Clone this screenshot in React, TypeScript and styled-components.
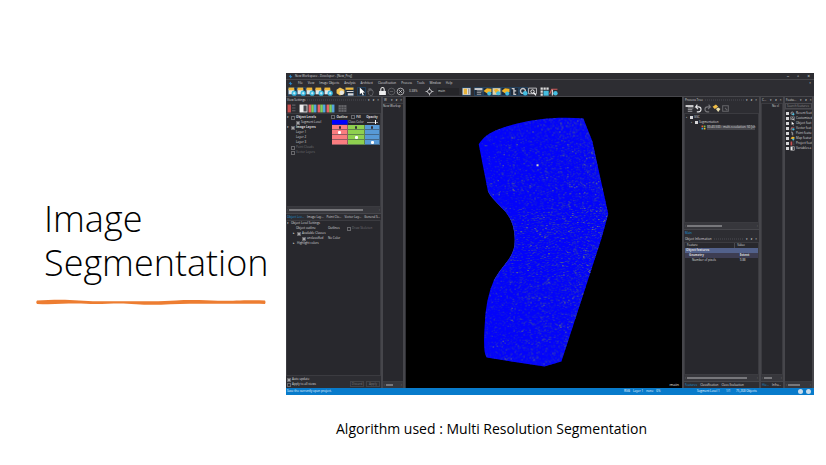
import React from "react";
import styled, { createGlobalStyle, css } from "styled-components";

const GlobalStyle = createGlobalStyle`
  * { box-sizing: border-box; }
  body { margin: 0; background: #ffffff; color: #000000; font-family: "Open Sans", "Noto Sans", sans-serif; }
  button, input, select { font: inherit; color: inherit; margin: 0; padding: 0; border: 0; background: none; }
  ul { list-style: none; margin: 0; padding: 0; }
`;

/* ---------- slide ---------- */

const Slide = styled.main`
  display: grid;
  grid-template-columns: 286px minmax(0, 1fr);
  padding-right: 12px;
`;

const TitleColumn = styled.header`
  padding: 197px 0 0 36px;
`;

const Title = styled.h1`
  margin: 0 0 14px;
  padding-left: 8px;
  font-family: "Open Sans", sans-serif;
  font-size: 36px;
  font-weight: 300;
  line-height: 44px;
`;

const Stroke = styled.svg`
  display: block;
  width: 230px;
  height: 7px;
`;

const Figure = styled.figure`
  margin: 0;
  padding-top: 73px;
  min-width: 0;
`;

const Caption = styled.figcaption`
  padding: 24px 0 0 50px;
  font-family: "Open Sans", sans-serif;
  font-size: 14px;
  line-height: 20px;
`;

/* ---------- application window ---------- */

const Window = styled.section`
  display: flex;
  flex-direction: column;
  background: #2d2d32;
  color: #dcdcde;
  font-family: "Open Sans", "Noto Sans", sans-serif;
  font-size: 3px;
  font-weight: 500;
  line-height: 5px;
  white-space: nowrap;
  overflow: hidden;
`;

const TitleBar = styled.div`
  display: flex;
  align-items: center;
  height: 7px;
  padding: 0 4px 0 2px;
  gap: 2px;
  border-bottom: 1px solid #47474c;
`;

const Spacer = styled.span`
  flex: 1;
`;

const WindowButtons = styled.div`
  display: flex;
  gap: 8px;
  font-size: 5px;
`;

const MenuBar = styled.nav`
  display: flex;
  align-items: center;
  height: 7px;
  padding: 0 3px 0 2px;
  gap: 5px;
`;

const PlainButton = styled.button`
  display: block;
  line-height: 5px;
`;

const Toolbar = styled.div<{ $small?: boolean }>`
  display: flex;
  align-items: center;
  height: ${(p) => (p.$small ? 10 : 9)}px;
  padding-left: ${(p) => (p.$small ? 1 : 2)}px;
  gap: 3px;
`;

const ToolGroup = styled.div`
  display: flex;
`;

const ToolButton = styled.button<{ $on?: boolean }>`
  width: 9px;
  height: 9px;
  ${(p) => p.$on && css`background: #1f2a38; box-shadow: inset 0 0 0 1px #23405c;`}
  svg { display: block; width: 9px; height: 9px; }
`;

const MiniSelect = styled.select<{ $wide?: boolean }>`
  appearance: none;
  width: ${(p) => (p.$wide ? 22 : 14)}px;
  height: 7px;
  padding-left: 1px;
  line-height: 5px;
  background: ${(p) => (p.$wide ? "#252529" : "transparent")};
`;

const Body = styled.div`
  display: grid;
  grid-template-columns: 97px 22px minmax(0, 1fr) 77px 24px 29px;
  height: 292px;
  border-top: 1px solid #47474c;
  background: #46464b;
`;

const Dock = styled.div`
  display: flex;
  flex-direction: column;
  min-width: 0;
  overflow: hidden;
  background: #2d2d32;
  border-right: 2px solid #46464b;
`;

const DockHeader = styled.div`
  display: flex;
  align-items: center;
  height: 6px;
  padding: 0 2px 0 1px;
  gap: 2px;
`;

const Grip = styled.span`
  flex: 1;
  height: 2px;
  background: repeating-linear-gradient(90deg, #3c3c42 0 1px, #2d2d32 1px 2px);
`;

const DockTools = styled.div`
  display: flex;
  gap: 3px;
`;

const Panel = styled.div<{ $grow?: boolean; $height?: number }>`
  ${(p) => (p.$grow ? "flex: 1;" : "")}
  ${(p) => (p.$height ? `height: ${p.$height}px;` : "")}
  min-height: 0;
  overflow: hidden;
  background: #28282d;
  border: 1px solid #3b3b40;
`;

const PlainPanel = styled(Panel)`
  border-width: 1px 0;
`;

const ScrollTrack = styled.div`
  display: flex;
  align-items: center;
  height: 6px;
  padding: 0 1px;
  gap: 1px;
  background: #37373c;
  color: #8b8b8f;
`;

const Thumb = styled.span<{ $size: number }>`
  width: ${(p) => p.$size}%;
  height: 2px;
  margin-right: auto;
  background: #77777b;
`;

const Tabs = styled.div`
  display: flex;
  height: 7px;
  align-items: center;
  gap: 3px;
  padding-left: 1px;
  border-top: 1px solid #46464b;
`;

const Tab = styled.button<{ $on?: boolean }>`
  line-height: 5px;
  color: ${(p) => (p.$on ? "#1b93d8" : "#dcdcde")};
`;

const Tree = styled.ul`
  padding: 1px 0 0 1px;
`;

const TreeRow = styled.li<{ $depth?: number; $bold?: boolean; $dim?: boolean }>`
  display: flex;
  align-items: center;
  gap: 1px;
  height: 5px;
  padding-left: ${(p) => (p.$depth || 0) * 5}px;
  font-weight: ${(p) => (p.$bold ? 700 : 500)};
  color: ${(p) => (p.$dim ? "#727276" : "inherit")};
`;

const Arrow = styled.span`
  width: 3px;
`;

const CheckLabel = styled.label`
  display: flex;
  align-items: center;
  gap: 1px;
  line-height: 5px;
`;

const CheckBox = styled.input.attrs({ type: "checkbox" })`
  appearance: none;
  width: 4px;
  height: 4px;
  border: 1px solid #67676b;
  &:checked { background: #a5a5a8; }
`;

const LayerGrid = styled.div`
  display: grid;
  grid-template-columns: 45px 16px 17px 1fr;
  padding-top: 1px;
`;

const LayerColumn = styled.div`
  display: flex;
  flex-direction: column;
  min-width: 0;
`;

const Cell = styled.div<{ $bg?: string; $bold?: boolean }>`
  display: flex;
  align-items: center;
  justify-content: center;
  height: 5px;
  background: ${(p) => p.$bg || "transparent"};
  border-style: solid;
  border-color: ${(p) => (p.$bg ? "rgba(50, 60, 70, 0.5)" : "transparent")};
  border-width: 0 1px 1px 0;
  font-weight: ${(p) => (p.$bold ? 700 : 500)};
`;

const Dot = styled.span<{ $dark?: boolean }>`
  width: ${(p) => (p.$dark ? 2 : 3)}px;
  height: 3px;
  border-radius: 1px;
  background: ${(p) => (p.$dark ? "#32323a" : "#ffffff")};
`;

const Range = styled.input.attrs({ type: "range" })`
  appearance: none;
  width: 11px;
  height: 1px;
  background: #99999d;
  &::-webkit-slider-thumb { appearance: none; width: 1px; height: 4px; background: #ffffff; }
`;

const SettingRow = styled.div`
  display: grid;
  grid-template-columns: 41px 19px 1fr;
  height: 5px;
`;

const Indent = styled.div<{ $depth: number }>`
  display: flex;
  align-items: center;
  gap: 1px;
  padding-left: ${(p) => p.$depth * 3}px;
`;

const UpdateBar = styled.div`
  display: flex;
  justify-content: space-between;
  align-items: flex-end;
  height: 12px;
  padding: 0 1px 1px;
`;

const ButtonPair = styled.div`
  display: flex;
  gap: 2px;
`;

const DimButton = styled.button`
  width: 14px;
  height: 6px;
  line-height: 4px;
  color: #7a7a7e;
  border: 1px solid #414146;
`;

const Viewport = styled.div`
  display: flex;
  position: relative;
  min-width: 0;
  background: #000000;
  border-left: 1px solid #303035;
  border-right: 2px solid #46464b;
`;

const Scene = styled.svg`
  width: 100%;
  height: 100%;
`;

const SceneLabel = styled.span`
  position: absolute;
  right: 3px;
  bottom: 1px;
  font-size: 4px;
  color: #e8e8e8;
`;

const Highlight = styled.span`
  background: #46464b;
`;

const Bullet = styled.span`
  flex: none;
  width: 3px;
  height: 3px;
  background: #d6d6d8;
`;

const SearchInput = styled.input`
  display: block;
  width: 100%;
  height: 6px;
  padding-left: 1px;
  border: 1px solid #4a4a4f;
  &::placeholder { color: #8d8d91; opacity: 1; }
`;

const InfoTable = styled.table`
  width: 100%;
  border-collapse: collapse;
  table-layout: fixed;
  th, td { height: 5px; padding: 0 0 0 2px; line-height: 5px; text-align: left; font-weight: 500; }
  th:first-child { width: 68%; border-right: 1px solid #4a4a4f; }
`;

const InfoRow = styled.tr<{ $bg?: string; $depth?: number; $bold?: boolean }>`
  background: ${(p) => p.$bg || "transparent"};
  && td { font-weight: ${(p) => (p.$bold ? 700 : 500)}; }
  && td:first-child { padding-left: ${(p) => 1 + (p.$depth || 0) * 3}px; }
  && td:last-child { padding-left: 5px; }
`;

const StatusBar = styled.footer`
  display: grid;
  grid-template-columns: 337px 73px 29px 10px 1fr auto;
  align-items: center;
  height: 7px;
  padding: 0 3px 0 1px;
  background: #087bcb;
  color: #f2f9ff;
`;

const StatusGroup = styled.span`
  display: flex;
  gap: 3px;
`;

const StatusDot = styled.i`
  width: 5px;
  height: 5px;
  border-radius: 50%;
  background: #c9dcea;
`;

/* ---------- icons ---------- */

type IconKind =
  | "layers" | "folder" | "window" | "cursor" | "hand" | "lock" | "minus" | "plus" | "move"
  | "columns" | "form" | "cube" | "picture" | "tree" | "gear" | "find" | "grid" | "chart"
  | "mono" | "rgb" | "undo" | "redo" | "chain" | "box" | "tiles" | "bars" | "table";

const glyphs: Record<IconKind, React.ReactNode> = {
  layers: (<><path d="M1 2h5v5H1z" fill="#dfe6ea" /><path d="M1 1h5v2.4H1z" fill="#f0b83a" /><circle cx="6" cy="6" r="2.3" fill="#35b6de" /><path d="M6 4.8v2.4M4.8 6h2.4" stroke="#e9faff" strokeWidth=".7" /></>),
  folder: (<><path d="M1 3l3-2 4 2v3L4 8 1 6z" fill="#f2c455" /><circle cx="5.6" cy="5.6" r="2" fill="#e6e6e2" /></>),
  window: (<><path d="M1 1h7v2H1z" fill="#f0b83a" /><path d="M2 4h6v1H2zM3 6h5v2H3z" fill="#d5d5d8" /></>),
  cursor: <path d="M3 1v6l1.5-1.4L5.6 8l1-.4-1-2.2h2z" fill="#fff" />,
  hand: <path d="M3 7L2 4l1 .6V2l1 2V1.5l1 2V2l1 2V3l1 2-1 3H4z" fill="none" stroke="#66666b" strokeWidth=".7" />,
  lock: (<><path d="M3 4V2.5a1.5 1.5 0 013 0V4" fill="none" stroke="#eee" strokeWidth=".9" /><path d="M1.5 4h6v3.6h-6z" fill="#eee" /></>),
  minus: (<><circle cx="4.5" cy="4.5" r="3" fill="none" stroke="#66666a" strokeWidth=".7" /><path d="M3 4.5h3" stroke="#66666a" strokeWidth=".7" /></>),
  plus: (<><circle cx="4.5" cy="4.5" r="3" fill="none" stroke="#c5c5c8" strokeWidth=".7" /><path d="M3.3 3.3l2.4 2.4M5.7 3.3L3.3 5.7" stroke="#c5c5c8" strokeWidth=".8" /></>),
  move: (<><path d="M4.5 1v7M1 4.5h7" stroke="#c5c5c8" strokeWidth=".8" /><circle cx="4.5" cy="4.5" r="1.8" fill="#2d2d32" stroke="#c5c5c8" strokeWidth=".8" /></>),
  columns: (<><path d="M1 1.5h7v6H1z" fill="#e2e2e2" /><path d="M2 2h3v5H2z" fill="#e6b33b" /><path d="M6 2h1v5H6z" fill="#8b8b8b" /></>),
  form: (<><path d="M1 1.5h7v1.6H1z" fill="#d8d8da" /><path d="M3 4h5M3 5.5h4M3 7h4" stroke="#a5a5a8" strokeWidth=".8" /></>),
  cube: (<><path d="M1 4l3-2.5L8 2v3L4 6z" fill="#f0b429" /><circle cx="6" cy="6.2" r="1.8" fill="#45bde0" /></>),
  picture: (<><path d="M1 1.5h7v6H1z" fill="#d9d2b0" /><path d="M2 3l3-1 2 2-3 2z" fill="#f0b429" /><circle cx="6" cy="6" r="1.8" fill="#45bde0" /></>),
  tree: <path d="M2 2h2v2h2M4 4v3h2" fill="none" stroke="#c9c9cc" strokeWidth="1.2" />,
  gear: (<><circle cx="4" cy="4" r="2.2" fill="none" stroke="#c5c5c8" strokeWidth="1.2" /><circle cx="6" cy="6" r="2" fill="#45bde0" /></>),
  find: (<><path d="M1 1.5h7v5H1z" fill="none" stroke="#c5c5c8" strokeWidth=".8" /><circle cx="4.5" cy="4.5" r="1.5" fill="none" stroke="#fff" strokeWidth=".8" /><path d="M5.5 5.5L7.6 8" stroke="#fff" /></>),
  grid: (<><path d="M1 1h2v2H1zM3.6 1h2v2h-2zM6.2 1h2v2h-2zM1 3.6h2v2H1zM1 6.2h2v2H1z" fill="#ddd" /><path d="M3.6 3.8h4.6v4.4H3.6z" fill="#45bde0" /></>),
  chart: (<><path d="M1 7L3 2.5h5" fill="none" stroke="#d35b5b" strokeWidth="1" /><path d="M3.5 3v5" stroke="#ddd" /><circle cx="6.2" cy="6" r="2" fill="#45bde0" /></>),
  mono: (<><path d="M1 1h7v7H1z" fill="#eee" /><path d="M4.5 1.8h2.8v5.4H4.5z" fill="#46464b" /></>),
  rgb: (<><path d="M1 1h2.4v7H1z" fill="#e76565" /><path d="M3.4 1h2.3v7H3.4z" fill="#80cf5c" /><path d="M5.7 1H8v7H5.7z" fill="#55a4dc" /></>),
  undo: <path d="M3.5 1L2 3h2.5a2.2 2.2 0 010 4.5H3M2 3l2 2" fill="none" stroke="#e6e6e8" strokeWidth="1" />,
  redo: <path d="M5.5 1L7 3H4.5a2.2 2.2 0 000 4.5H6M7 3L5 5" fill="none" stroke="#77777b" strokeWidth="1" />,
  chain: (<><path d="M1 3l3-2 2 2-3 2z" fill="#f0bd45" /><path d="M4 5l2-1.5L8 5 6 7.5z" fill="#e9dfae" /></>),
  box: <path d="M2 2h5v5H2zM4 4l2 2" fill="none" stroke="#66666a" strokeWidth=".9" />,
  table: (<><path d="M1 1.5h7v6H1z" fill="#68686c" /><path d="M1 3.5h7M1 5.5h7M3.3 1.5v6M5.7 1.5v6" stroke="#38383d" strokeWidth=".5" /></>),
  tiles: (<><path d="M1 1h3v3H1z" fill="#e85d35" /><path d="M5 1h3v3H5z" fill="#7dc242" /><path d="M1 5h3v3H1z" fill="#35a5e5" /><path d="M5 5h3v3H5z" fill="#f2c12e" /></>),
  bars: (<><path d="M1 1h3v7H1z" fill="#c94f4f" /><path d="M5 1.5h3M5 4h3M5 6.5h3" stroke="#5f5f64" strokeWidth="1" /></>),
};

const SmallIcon = styled.svg`
  flex: none;
  display: block;
  width: 5px;
  height: 5px;
`;

const Glyph = ({ kind }: { kind: IconKind }) => <svg viewBox="0.5 0.5 8 8" aria-hidden="true">{glyphs[kind]}</svg>;

const Tools = ({ kinds, on = [] }: { kinds: IconKind[]; on?: number[] }) => (
  <ToolGroup>
    {kinds.map((kind, i) => (
      <ToolButton key={i} $on={on.includes(i)} aria-label={kind}><Glyph kind={kind} /></ToolButton>
    ))}
  </ToolGroup>
);

const Header = ({ name }: { name: string }) => (
  <DockHeader>
    <span>{name}</span>
    <Grip />
    <DockTools>
      <PlainButton aria-label="Menu">▾</PlainButton>
      <PlainButton aria-label="Pin">ᴘ</PlainButton>
      <PlainButton aria-label="Close">×</PlainButton>
    </DockTools>
  </DockHeader>
);

const Scroll = ({ size }: { size: number }) => (
  <ScrollTrack><span>‹</span><Thumb $size={size} /><span>›</span></ScrollTrack>
);

const Check = ({ label, checked = false }: { label: string; checked?: boolean }) => (
  <CheckLabel><CheckBox defaultChecked={checked} />{label}</CheckLabel>
);

/* ---------- segmented field ---------- */

const FIELD =
  "M73 47C78 38 88 33 101 29C128 21 153 19 178 21L187 44L203 117L196 142L156 265L139 270L81 261Q77 256 79 228Q80 202 88 184C96 168 108 162 109 146C110 128 103 117 96 111C89 103 84 99 82 93Z";

const speckle = (count: number, seed: number, skew: number) => {
  let state = seed;
  const next = () => {
    state = (state + 0x6d2b79f5) | 0;
    let t = Math.imul(state ^ (state >>> 15), 1 | state);
    t = (t + Math.imul(t ^ (t >>> 7), 61 | t)) ^ t;
    return ((t ^ (t >>> 14)) >>> 0) / 4294967296;
  };
  let d = "";
  for (let i = 0; i < count; i++) {
    const x = Math.floor(72 + 132 * Math.pow(next(), skew));
    const y = Math.floor(20 + 251 * next());
    d += `M${x} ${y}h1v1h-1z`;
  }
  return d;
};

const specks = [
  { color: "#1018e0", d: speckle(7000, 11, 0.8) },
  { color: "#2430c0", d: speckle(3000, 71, 0.7) },
  { color: "#44509c", d: speckle(800, 37, 0.6) },
  { color: "#7c886a", d: speckle(140, 93, 0.6) },
];

const FieldScene = () => (
  <Scene viewBox="0 0 277 291" role="img" aria-label="Segmented field">
    <clipPath id="field"><path d={FIELD} /></clipPath>
    <path d={FIELD} fill="#0303fa" />
    <g clipPath="url(#field)">
      {specks.map((s) => <path key={s.color} d={s.d} fill={s.color} />)}
      <path d="M82 93C84 99 89 103 96 111C103 117 110 128 109 146C108 162 96 168 88 184" fill="none" stroke="#3040b8" strokeWidth="1" />
      <path d="M131 67h2v2h-2z" fill="#d8dac4" />
    </g>
  </Scene>
);

/* ---------- docks ---------- */

const menus = ["File", "View", "Image Objects", "Analysis", "Architect", "Classification", "Process", "Tools", "Window", "Help"];

const LayerTable = () => (
  <LayerGrid>
    <LayerColumn>
      <TreeRow $bold><Arrow>▾</Arrow><Check label="Object Levels" /></TreeRow>
      <TreeRow $depth={1}><Arrow /><Check label="Segment Level" checked /></TreeRow>
      <TreeRow $bold><Arrow>▾</Arrow><Check label="Image Layers" checked /></TreeRow>
      <TreeRow $depth={1}><Arrow />Layer 1</TreeRow>
      <TreeRow $depth={1}><Arrow />Layer 2</TreeRow>
      <TreeRow $depth={1}><Arrow />Layer 3</TreeRow>
      <TreeRow $dim><Arrow /><Check label="Point Clouds" /></TreeRow>
      <TreeRow $dim><Arrow /><Check label="Vector Layers" /></TreeRow>
    </LayerColumn>
    <LayerColumn>
      <Cell $bold><Check label="Outline" /></Cell>
      <Cell $bg="#0000ff" />
      <Cell $bg="#fb7d80"><Dot $dark /></Cell>
      <Cell $bg="#fb7d80"><Dot /></Cell>
      <Cell $bg="#fb7d80" />
      <Cell $bg="#fb7d80" />
    </LayerColumn>
    <LayerColumn>
      <Cell $bold><Check label="Fill" /></Cell>
      <Cell>Class Color</Cell>
      <Cell $bg="#8fd04f"><Dot $dark /></Cell>
      <Cell $bg="#8fd04f" />
      <Cell $bg="#8fd04f"><Dot /></Cell>
      <Cell $bg="#8fd04f" />
    </LayerColumn>
    <LayerColumn>
      <Cell $bold>Opacity</Cell>
      <Cell><Range aria-label="Opacity" defaultValue={80} /></Cell>
      <Cell $bg="#5799d6"><Dot $dark /></Cell>
      <Cell $bg="#5799d6" />
      <Cell $bg="#5799d6" />
      <Cell $bg="#5799d6"><Dot /></Cell>
    </LayerColumn>
  </LayerGrid>
);

const ViewSettings = () => (
  <Dock>
    <Header name="View Settings" />
    <Toolbar $small>
      <Tools kinds={["bars"]} />
      <Tools kinds={["mono", "rgb", "rgb", "rgb"]} />
      <Tools kinds={["table"]} />
    </Toolbar>
    <Panel $height={94}><LayerTable /></Panel>
    <Scroll size={80} />
    <Tabs>
      <Tab $on>Object Lev...</Tab><Tab>Image Lay...</Tab><Tab>Point Clo...</Tab><Tab>Vector Lay...</Tab><Tab>General S...</Tab>
    </Tabs>
    <Panel $grow>
      <SettingRow><Indent $depth={0}><Arrow>▾</Arrow>Object Level Settings</Indent></SettingRow>
      <SettingRow><Indent $depth={3}>Object outline</Indent><span>Outlines</span><TreeRow as="div" $dim><Check label="Draw Skeleton" /></TreeRow></SettingRow>
      <SettingRow><Indent $depth={2}><Arrow>▸</Arrow><Check label="Available Classes" checked /></Indent></SettingRow>
      <SettingRow><Indent $depth={5}><Check label="unclassified" checked /></Indent><span>No Color</span></SettingRow>
      <SettingRow><Indent $depth={2}><Arrow>▸</Arrow>Highlight colors</Indent></SettingRow>
    </Panel>
    <UpdateBar>
      <div><Check label="Auto update" checked /><Check label="Apply to all views" /></div>
      <ButtonPair><DimButton disabled>Discard</DimButton><DimButton disabled>Apply</DimButton></ButtonPair>
    </UpdateBar>
  </Dock>
);

const ProcessDock = () => (
  <Dock>
    <Header name="Process Tree" />
    <Toolbar $small><Tools kinds={["form", "undo", "redo", "chain", "box"]} /></Toolbar>
    <Panel $height={110}>
      <Tree>
        <TreeRow><Arrow>▪</Arrow><Bullet />GSC</TreeRow>
        <TreeRow $depth={1}><Arrow>▪</Arrow><Bullet />Segmentation</TreeRow>
        <TreeRow $depth={3}><SmallIcon viewBox="0 0 9 9">{glyphs.tiles}</SmallIcon><Highlight>00:40.500 : multi-resolution: 50 [sh</Highlight></TreeRow>
      </Tree>
    </Panel>
    <Scroll size={48} />
    <Tabs><Tab $on>Main</Tab></Tabs>
    <Header name="Object Information" />
    <Panel $grow>
      <InfoTable>
        <thead><tr><th>Feature</th><th>Value</th></tr></thead>
        <tbody>
          <InfoRow $bg="#52618b" $bold><td>Object features</td><td /></InfoRow>
          <InfoRow $bg="#3d3d52" $depth={1} $bold><td>Geometry</td><td>Extent</td></InfoRow>
          <InfoRow $depth={2}><td>Number of pixels</td><td>9.88</td></InfoRow>
        </tbody>
      </InfoTable>
    </Panel>
    <Scroll size={82} />
    <Tabs><Tab $on>Features</Tab><Tab>Classification</Tab><Tab>Class Evaluation</Tab></Tabs>
  </Dock>
);

const features: [string, IconKind][] = [
  ["Recent feat", "gear"], ["Customized", "find"], ["Object feat", "cursor"], ["Vector feat", "chart"],
  ["Point featu", "tree"], ["Map featur", "cube"], ["Project feat", "bars"], ["Variables a", "mono"],
];

export default function App() {
  return (
    <>
      <GlobalStyle />
      <Slide>
        <TitleColumn>
          <Title>Image<br />Segmentation</Title>
          <Stroke viewBox="0 0 230 7" preserveAspectRatio="none" aria-hidden="true">
            <path d="M1 1.6C14 .8 30 .4 43 1.6S70 2 92 2.2S128 2.6 140 1.6S170 1.2 182 1.7S205 .8 229 1.4Q230 3.5 229 5C200 4.4 176 5 156 4.8S120 7 100 5.2S70 5.6 50 4.8S20 6 1 5Q-.5 3.4 1 1.6Z" fill="#ed7d31" />
          </Stroke>
        </TitleColumn>
        <Figure>
          <Window>
            <TitleBar>
              <SmallIcon viewBox="0 0 9 9"><path d="M5 1L1 5h3v3l4-4H5z" fill="#2791dc" /></SmallIcon>
              <span>New Workspace - Developer - [New_Proj]</span>
              <Spacer />
              <WindowButtons>
                <PlainButton aria-label="Minimize">–</PlainButton>
                <PlainButton aria-label="Restore">▫</PlainButton>
                <PlainButton aria-label="Close">×</PlainButton>
              </WindowButtons>
            </TitleBar>
            <MenuBar>
              <SmallIcon viewBox="0 0 9 9"><path d="M5 1L1 5h3v3l4-4H5z" fill="#2791dc" /></SmallIcon>
              {menus.map((m) => <PlainButton key={m}>{m}</PlainButton>)}
              <Spacer />
              <PlainButton aria-label="Close view">×</PlainButton>
            </MenuBar>
            <Toolbar>
              <Tools kinds={["layers", "layers", "layers", "layers", "layers"]} on={[0, 1]} />
              <Tools kinds={["folder", "window"]} on={[1]} />
              <Tools kinds={["cursor", "hand"]} on={[0]} />
              <Tools kinds={["lock", "minus", "plus"]} />
              <MiniSelect aria-label="Zoom" defaultValue="z"><option value="z">0.38%</option></MiniSelect>
              <Tools kinds={["move"]} />
              <MiniSelect $wide aria-label="Map" defaultValue="m"><option value="m">main</option></MiniSelect>
              <Tools kinds={["columns"]} on={[0]} />
              <Tools kinds={["form", "cube", "picture", "cube", "tree", "gear", "find"]} on={[0, 1, 2, 3, 4, 5]} />
              <Tools kinds={["grid", "chart"]} />
            </Toolbar>
            <Body>
              <ViewSettings />
              <Dock>
                <Header name="W" />
                <PlainPanel $grow>New Worksp</PlainPanel>
                <Scroll size={40} />
              </Dock>
              <Viewport>
                <FieldScene />
                <SceneLabel>main</SceneLabel>
              </Viewport>
              <ProcessDock />
              <Dock>
                <Header name="C..." />
                <Panel $grow><TreeRow as="div" $depth={2}>No cl</TreeRow></Panel>
                <Scroll size={40} />
                <Tabs><Tab $on>Hie...</Tab><Tab>Infra...</Tab></Tabs>
              </Dock>
              <Dock>
                <Header name="Featu..." />
                <SearchInput aria-label="Search features" placeholder="Search features" />
                <PlainPanel $grow>
                  <Tree>
                    {features.map(([name, kind]) => (
                      <TreeRow key={name}><Bullet /><SmallIcon viewBox="0 0 9 9">{glyphs[kind]}</SmallIcon>{name}</TreeRow>
                    ))}
                  </Tree>
                </PlainPanel>
                <Scroll size={50} />
              </Dock>
            </Body>
            <StatusBar>
              <span>Save the currently open project.</span>
              <StatusGroup><span>RGB</span><span>Layer 1</span><span>none</span><span>6%</span></StatusGroup>
              <span>Segment Level 1</span>
              <span>1/1</span>
              <span>75,268 Objects</span>
              <StatusGroup><StatusDot /><StatusDot /></StatusGroup>
            </StatusBar>
          </Window>
          <Caption>Algorithm used : Multi Resolution Segmentation</Caption>
        </Figure>
      </Slide>
    </>
  );
}
